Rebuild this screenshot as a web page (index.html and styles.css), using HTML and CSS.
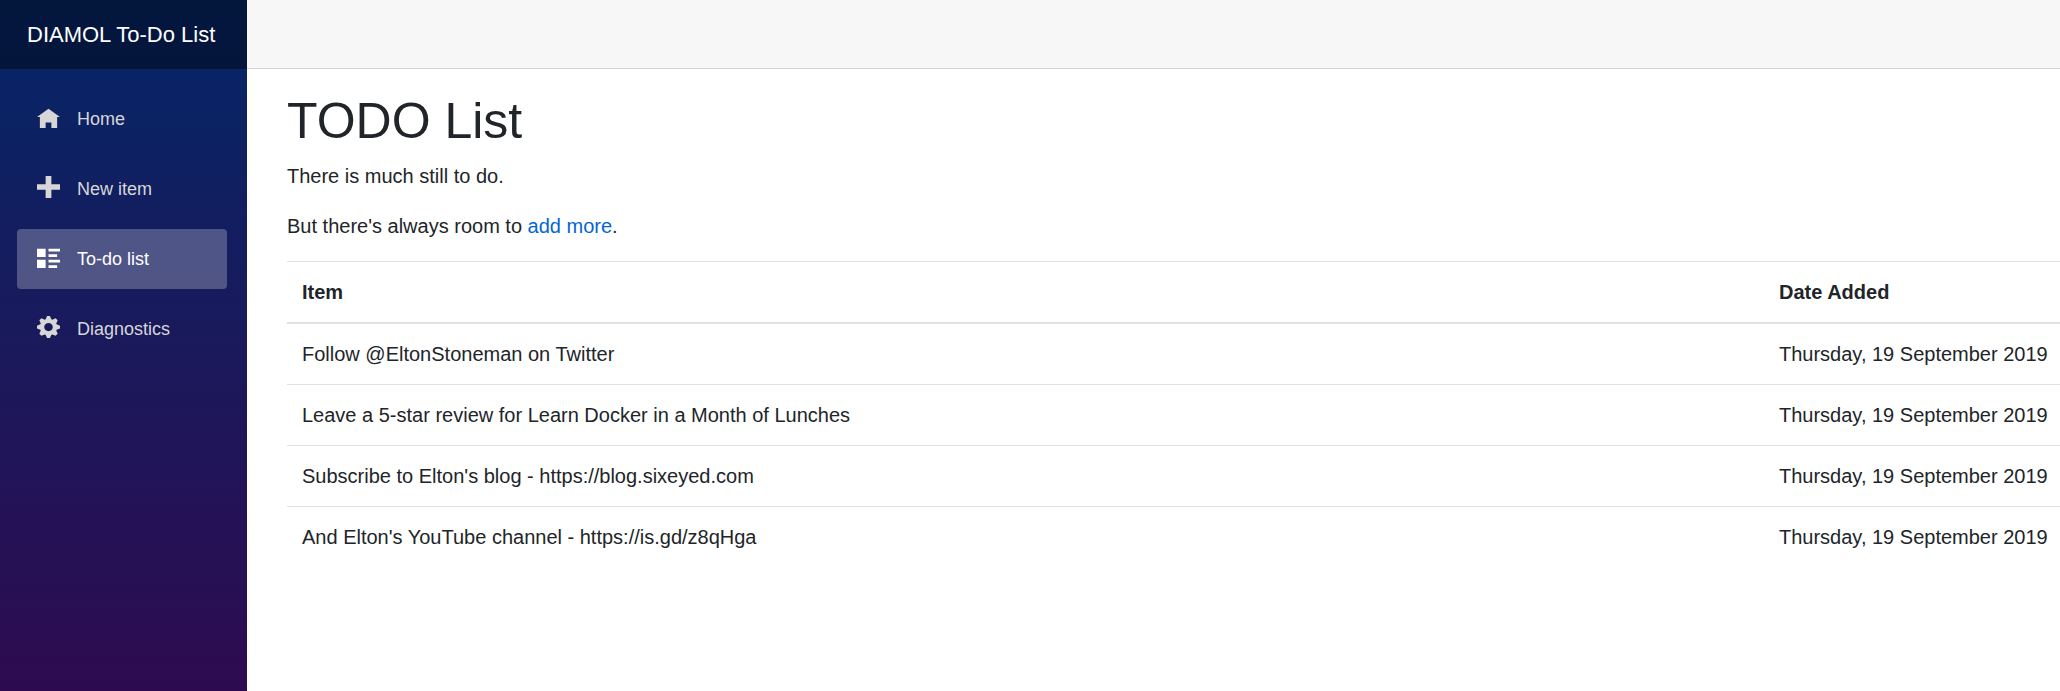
FILE: index.html
```html
<!DOCTYPE html>
<html lang="en">
<head>
<meta charset="utf-8">
<title>DIAMOL To-Do List</title>
<link rel="stylesheet" href="styles.css">
</head>
<body>
<div class="app">
  <aside class="sidebar">
    <div class="brand"><a href="#">DIAMOL To-Do List</a></div>
    <nav class="nav">
      <a class="nav-link" href="#"><svg class="icon" viewBox="0 -1 8 8" preserveAspectRatio="none"><path d="M4 0l-4 3h1v4h2v-2h2v2h2v-4.03l1 .03-4-3z"/></svg>Home</a>
      <a class="nav-link" href="#"><svg class="icon" viewBox="0 0 8 8" preserveAspectRatio="none"><path d="M3 0v3h-3v2h3v3h2v-3h3v-2h-3v-3h-2z"/></svg>New item</a>
      <a class="nav-link active" href="#"><svg class="icon" viewBox="0 -1 8 8" preserveAspectRatio="none"><path d="M0 0v3h3v-3h-3zm4 0v1h4v-1h-4zm0 2v1h3v-1h-3zm-4 2v3h3v-3h-3zm4 0v1h4v-1h-4zm0 2v1h3v-1h-3z"/></svg>To-do list</a>
      <a class="nav-link" href="#"><svg class="icon" viewBox="0 0 8 8" preserveAspectRatio="none"><path d="M3.5 0l-.5 1.19c-.1.03-.19.08-.28.13l-1.19-.5-.72.72.5 1.19c-.05.1-.09.18-.13.28l-1.19.5v1l1.19.5c.04.1.08.18.13.28l-.5 1.19.72.72 1.19-.5c.09.04.18.09.28.13l.5 1.19h1l.5-1.19c.09-.04.19-.08.28-.13l1.19.5.72-.72-.5-1.19c.04-.09.09-.19.13-.28l1.19-.5v-1l-1.19-.5c-.03-.09-.08-.19-.13-.28l.5-1.19-.72-.72-1.19.5c-.09-.04-.19-.09-.28-.13l-.5-1.19h-1zm.5 2.5c.83 0 1.5.67 1.5 1.5s-.67 1.5-1.5 1.5-1.5-.67-1.5-1.5.67-1.5 1.5-1.5z"/></svg>Diagnostics</a>
    </nav>
  </aside>
  <div class="main">
    <div class="top-row"></div>
    <div class="content">
      <h1>TODO List</h1>
      <p>There is much still to do.</p>
      <p>But there's always room to <a href="#">add more</a>.</p>
      <table class="table">
        <thead>
          <tr><th>Item</th><th class="date">Date Added</th></tr>
        </thead>
        <tbody>
          <tr><td>Follow @EltonStoneman on Twitter</td><td>Thursday, 19 September 2019</td></tr>
          <tr><td>Leave a 5-star review for Learn Docker in a Month of Lunches</td><td>Thursday, 19 September 2019</td></tr>
          <tr><td>Subscribe to Elton's blog - https://blog.sixeyed.com</td><td>Thursday, 19 September 2019</td></tr>
          <tr><td>And Elton's YouTube channel - https://is.gd/z8qHga</td><td>Thursday, 19 September 2019</td></tr>
        </tbody>
      </table>
    </div>
  </div>
</div>
</body>
</html>
```
FILE: styles.css
```css
* { box-sizing: border-box; }
html, body { margin: 0; height: 100%; }
body {
  font-family: "Liberation Sans", Arial, sans-serif;
  font-size: 20px;
  line-height: 1.5;
  color: #212529;
  background: #fff;
  overflow: hidden;
}
.app { display: flex; height: 691px; }
.sidebar {
  width: 247px;
  flex: none;
  background: linear-gradient(180deg, #052767 0%, #2e0b50 100%);
}
.brand {
  height: 69px;
  background: rgba(0, 0, 0, 0.4);
  display: flex;
  align-items: center;
  padding-left: 27px;
}
.brand a { color: #fff; text-decoration: none; font-size: 22px; }
.nav { display: flex; flex-direction: column; padding-top: 20px; }
.nav-link {
  display: flex;
  align-items: center;
  height: 60px;
  margin: 0 20px 10px 17px;
  padding-left: 20px;
  border-radius: 4px;
  color: #d7d7d7;
  text-decoration: none;
  font-size: 18px;
}
.nav-link.active { background: rgba(255, 255, 255, 0.25); color: #fff; }
.icon { width: 23px; height: 22px; margin: -4px 17px 0 0; fill: currentColor; flex: none; }
.main { flex: 1; min-width: 0; overflow: hidden; }
.top-row { height: 69px; background: #f7f7f7; border-bottom: 1px solid #d6d5d5; }
.content { padding: 22px 0 0 40px; }
h1 { margin: 0 0 10px; font-size: 50px; font-weight: 400; line-height: 1.2; }
p { margin: 0 0 20px; }
a { color: #0366d6; }
.content a { text-decoration: none; }
.table { width: 1776px; border-collapse: collapse; }
.table th, .table td { padding: 15px; text-align: left; vertical-align: top; border-top: 1px solid #dee2e6; }
.table thead th { border-bottom: 2px solid #dee2e6; font-weight: 700; }
.date { width: 299px; }
```
